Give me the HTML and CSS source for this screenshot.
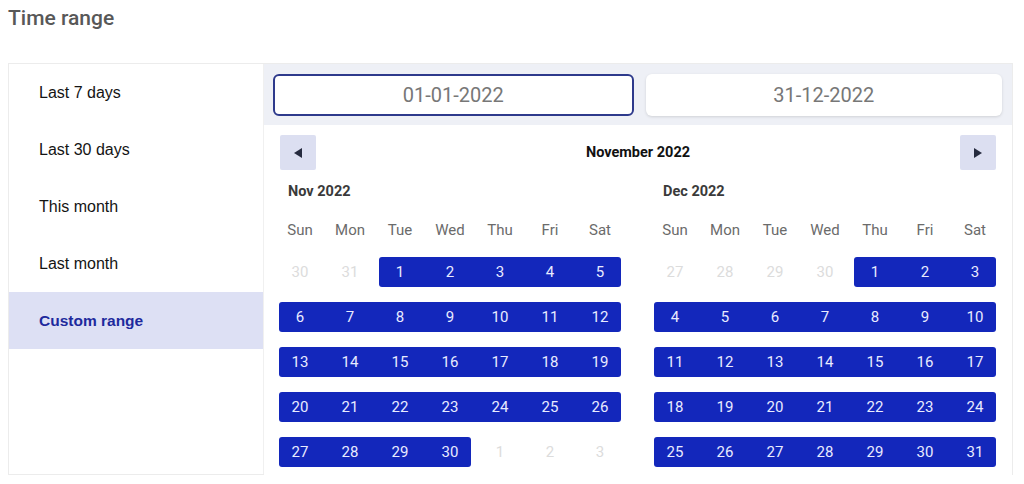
FILE: index.html
```html
<!DOCTYPE html>
<html>
<head>
<meta charset="utf-8">
<link rel="stylesheet" href="styles.css">
</head>
<body>
<h1 class="title">Time range</h1>
<div class="panel">
  <ul class="sidebar">
    <li class="opt">Last 7 days</li>
    <li class="opt">Last 30 days</li>
    <li class="opt">This month</li>
    <li class="opt">Last month</li>
    <li class="opt active">Custom range</li>
  </ul>
  <div class="main">
    <div class="inputs">
      <div class="field focus">01-01-2022</div>
      <div class="field">31-12-2022</div>
    </div>
    <div class="calendar">
      <div class="nav">
        <button class="navbtn" aria-label="Previous"><svg width="10" height="12" viewBox="0 0 10 12"><path d="M9 1 L1 6 L9 11 Z" fill="#262b3f"/></svg></button>
        <div class="navtitle">November 2022</div>
        <button class="navbtn" aria-label="Next"><svg width="10" height="12" viewBox="0 0 10 12"><path d="M1 1 L9 6 L1 11 Z" fill="#262b3f"/></svg></button>
      </div>
      <div class="months">
        <div class="month">
          <div class="mlabel">Nov 2022</div>
          <div class="week head"><span>Sun</span><span>Mon</span><span>Tue</span><span>Wed</span><span>Thu</span><span>Fri</span><span>Sat</span></div>
          <div class="week"><span class="day off">30</span><span class="day off">31</span><span class="day in start">1</span><span class="day in">2</span><span class="day in">3</span><span class="day in">4</span><span class="day in end">5</span></div>
          <div class="week"><span class="day in start">6</span><span class="day in">7</span><span class="day in">8</span><span class="day in">9</span><span class="day in">10</span><span class="day in">11</span><span class="day in end">12</span></div>
          <div class="week"><span class="day in start">13</span><span class="day in">14</span><span class="day in">15</span><span class="day in">16</span><span class="day in">17</span><span class="day in">18</span><span class="day in end">19</span></div>
          <div class="week"><span class="day in start">20</span><span class="day in">21</span><span class="day in">22</span><span class="day in">23</span><span class="day in">24</span><span class="day in">25</span><span class="day in end">26</span></div>
          <div class="week"><span class="day in start">27</span><span class="day in">28</span><span class="day in">29</span><span class="day in end">30</span><span class="day off">1</span><span class="day off">2</span><span class="day off">3</span></div>
        </div>
        <div class="month">
          <div class="mlabel">Dec 2022</div>
          <div class="week head"><span>Sun</span><span>Mon</span><span>Tue</span><span>Wed</span><span>Thu</span><span>Fri</span><span>Sat</span></div>
          <div class="week"><span class="day off">27</span><span class="day off">28</span><span class="day off">29</span><span class="day off">30</span><span class="day in start">1</span><span class="day in">2</span><span class="day in end">3</span></div>
          <div class="week"><span class="day in start">4</span><span class="day in">5</span><span class="day in">6</span><span class="day in">7</span><span class="day in">8</span><span class="day in">9</span><span class="day in end">10</span></div>
          <div class="week"><span class="day in start">11</span><span class="day in">12</span><span class="day in">13</span><span class="day in">14</span><span class="day in">15</span><span class="day in">16</span><span class="day in end">17</span></div>
          <div class="week"><span class="day in start">18</span><span class="day in">19</span><span class="day in">20</span><span class="day in">21</span><span class="day in">22</span><span class="day in">23</span><span class="day in end">24</span></div>
          <div class="week"><span class="day in start">25</span><span class="day in">26</span><span class="day in">27</span><span class="day in">28</span><span class="day in">29</span><span class="day in">30</span><span class="day in end">31</span></div>
        </div>
      </div>
    </div>
  </div>
</div>
</body>
</html>
```
FILE: styles.css
```css
* { box-sizing: border-box; }
html, body { margin: 0; padding: 0; background: #fff; }
body { padding: 0 8px; font-family: Roboto, "Liberation Sans", sans-serif; }

.title {
  margin: 0;
  padding-top: 5px;
  height: 63px;
  font-size: 21px;
  line-height: 26px;
  font-weight: 500;
  color: #585858;
}

.panel {
  display: flex;
  width: 1005px;
  height: 412px;
  border: 1px solid #ececec;
}

.sidebar {
  list-style: none;
  margin: 0;
  padding: 0;
  width: 255px;
  border-right: 1px solid #f0f0f0;
  flex: none;
}
.opt {
  height: 57px;
  padding-left: 30px;
  display: flex;
  align-items: center;
  font-family: "Liberation Sans", Arial, sans-serif;
  font-size: 16px;
  color: #141414;
}
.opt.active {
  background: #dde0f4;
  color: #1d2a9d;
  font-weight: bold;
  font-size: 15.5px;
}

.main {
  flex: 1;
  display: flex;
  flex-direction: column;
  min-width: 0;
}
.inputs {
  background: #eef0f6;
  height: 61px;
  padding: 10px 10px 9px 9px;
  display: flex;
  gap: 12px;
}
.field {
  flex: 1;
  height: 42px;
  background: #fff;
  border-radius: 6px;
  display: flex;
  align-items: center;
  justify-content: center;
  font-size: 20px;
  color: #777;
  box-shadow: 0 1px 3px rgba(0,0,0,0.13);
}
.field.focus {
  border: 2px solid #2e3a8c;
  box-shadow: none;
}

.calendar {
  flex: 1;
  background: #fff;
  padding: 10px 12px 0 11px;
}
.nav {
  display: flex;
  align-items: center;
  justify-content: space-between;
  padding: 0 4px 0 5px;
  height: 35px;
}
.navbtn {
  width: 36px;
  height: 35px;
  border: none;
  border-radius: 2px;
  background: #dcdff1;
  padding: 0;
  display: flex;
  align-items: center;
  justify-content: center;
}
.navtitle {
  font-weight: bold;
  font-size: 14.5px;
  color: #111;
}

.months {
  display: flex;
  gap: 25px;
  margin-top: 12px;
}
.month { width: 350px; }
.mlabel {
  padding-left: 13px;
  font-weight: bold;
  font-size: 14.5px;
  line-height: 20px;
  color: #3a3a3a;
}
.week {
  display: flex;
  height: 30px;
  margin-bottom: 15px;
}
.week.head {
  margin-top: 18px;
  height: 20px;
  margin-bottom: 17px;
}
.week span {
  width: 50px;
  flex: none;
  display: flex;
  align-items: center;
  justify-content: center;
  font-size: 15px;
}
.week.head span { color: #6b6b6b; }
.day.off { color: #dcdcdc; }
.day.in {
  background: #1327bb;
  color: #e9ebff;
}
.day.start {
  margin-left: 4px;
  width: 46px;
  padding-right: 4px;
  border-radius: 3px 0 0 3px;
}
.day.end {
  margin-right: 4px;
  width: 46px;
  padding-left: 4px;
  border-radius: 0 3px 3px 0;
}
```
